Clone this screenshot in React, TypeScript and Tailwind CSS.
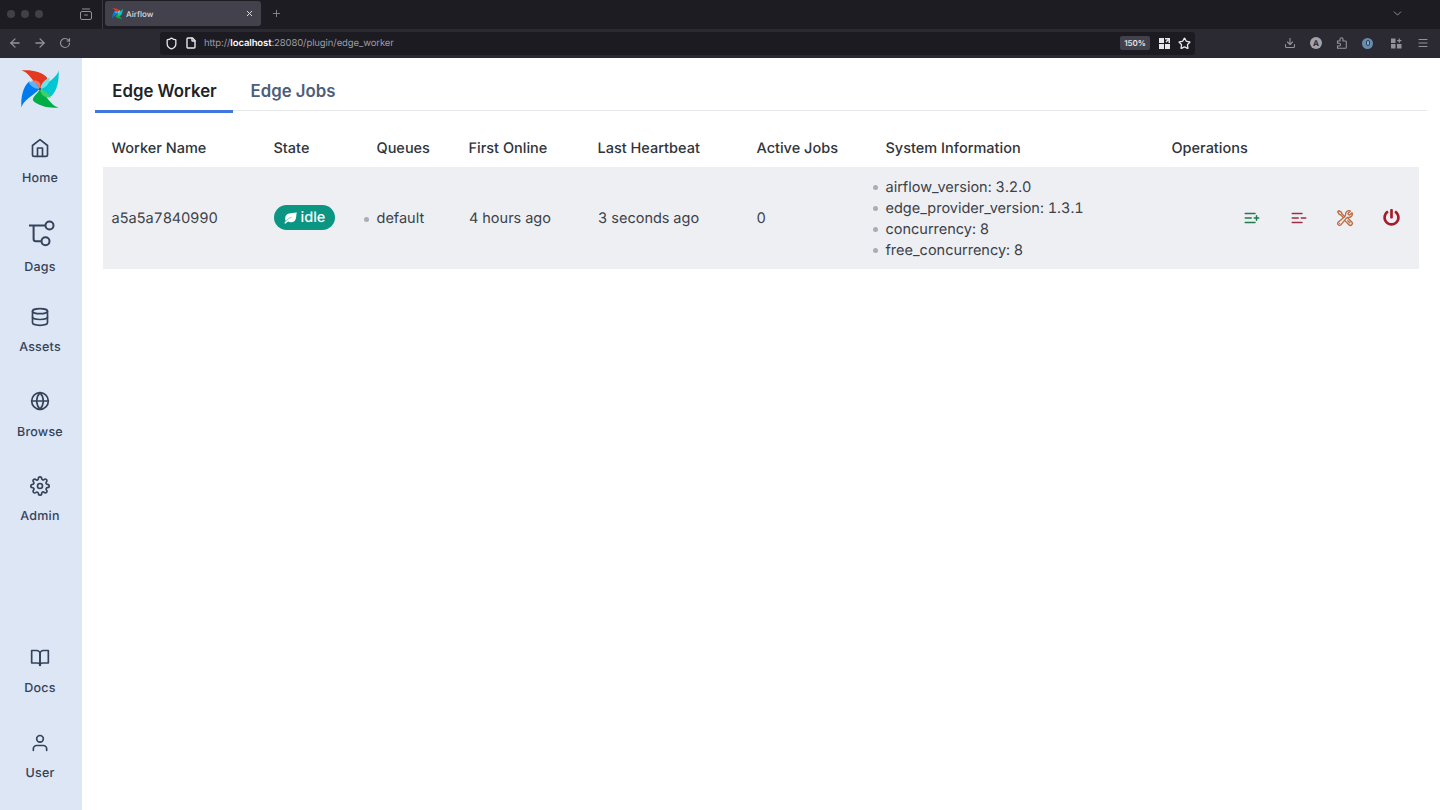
import type { ReactNode } from 'react'
import { FiBookOpen, FiDatabase, FiGlobe, FiHome, FiSettings, FiUser } from 'react-icons/fi'
import { HiOutlineWrenchScrewdriver } from 'react-icons/hi2'
import { FaPowerOff } from 'react-icons/fa'
import {
  ArrowLeft,
  ArrowRight,
  ChevronDown,
  Download,
  File,
  Menu,
  Plus,
  RotateCw,
  Shield,
  Star,
  X,
} from 'lucide-react'

interface NavItemProps {
  icon: ReactNode
  label: string
  className?: string
}

const columns = [
  'Worker Name',
  'State',
  'Queues',
  'First Online',
  'Last Heartbeat',
  'Active Jobs',
  'System Information',
  'Operations',
]

const systemInfo = [
  'airflow_version: 3.2.0',
  'edge_provider_version: 1.3.1',
  'concurrency: 8',
  'free_concurrency: 8',
]

function AirflowLogo({ className }: { className?: string }) {
  return (
    <svg className={className} viewBox="0 0 40 40">
      <path d="M20 19.500C13 13 9 3 1.500 1.500 11 .500 22 3 27 8.500 28 12 23 15 20 19.500z" fill="#e43921" />
      <path d="M20 19.500c-2-4-5-6-9-7.500 6-1.500 11 1 9 7.500z" fill="#ff7557" />
      <path d="M20.500 20C27 13 37 9 38.500 1.500 39.500 11 37 22 31.500 27 28 28 25 23 20.500 20z" fill="#00c7d4" />
      <path d="M20.500 20c.500-6 4-9 9-11.500C30 14 27 18 20.500 20z" fill="#6be2e8" />
      <path d="M20 20.500C27 27 31 37 38.500 38.500 29 39.500 18 37 13 31.500 12 28 17 25 20 20.500z" fill="#00ad46" />
      <path d="M20 20.500c5 1 9 4 11 8-6 .500-10-2-11-8z" fill="#3fcf68" />
      <path d="M19.500 20C13 27 3 31 1.500 38.500 .500 29 3 18 8.500 13 12 12 15 17 19.500 20z" fill="#017cee" />
      <path d="M19.500 20c-5 0-9-3-11-7 5-1 9 1 11 7z" fill="#5ab4fa" />
      <circle cx="20" cy="20" r="1.2" fill="#51504f" />
    </svg>
  )
}

function DagIcon() {
  return (
    <svg width="26" height="28" viewBox="0 0 26 28" fill="none" stroke="currentColor" strokeWidth="2">
      <path d="M0 5.500h16M4.600 5.500v13.500q0 2.300 2.300 2.300h5" />
      <circle cx="20.500" cy="5.500" r="4" />
      <circle cx="16.500" cy="21.300" r="4" />
    </svg>
  )
}

function LeafIcon() {
  return (
    <svg width="13" height="12" viewBox="0 0 13 12">
      <path
        d="M12.700.3C12 5 12.500 10.300 7.500 10.300c-1.600 0-2.600-.4-3.400-.8L1.200 11.800.3 11l1.500-2C.5 6.500 1.200 3 4.200 1.800 7 .8 10.500 1.500 12.700.3z"
        fill="currentColor"
      />
      <path d="M2 9.300C3.500 7.200 5.300 5.900 7.600 5.200" fill="none" stroke="#0b9684" strokeWidth=".5" />
    </svg>
  )
}

function ListIcon({ plus }: { plus?: boolean }) {
  return (
    <svg
      width="18"
      height="18"
      viewBox="0 0 24 24"
      fill="none"
      stroke="currentColor"
      strokeWidth="2"
      strokeLinecap="round"
    >
      <path d="M3 6h13M3 12h8M3 18h13M15 12h6" />
      {plus && <path d="M18 9v6" />}
    </svg>
  )
}

function Bullet() {
  return <span className="mr-2 -ml-[13px] size-[5px] shrink-0 rounded-full bg-[#a9adb5]" />
}

function NavItem({ icon, label, className = 'h-[84.6px]' }: NavItemProps) {
  return (
    <a className={`flex w-full flex-col items-center ${className}`}>
      <span className="flex h-[25px] items-center">{icon}</span>
      <span className="mt-[9px] text-[12.5px] leading-5 font-medium tracking-[0.2px]">{label}</span>
    </a>
  )
}

function Browser() {
  return (
    <header className="h-[58px] shrink-0 bg-[#2b2a33] text-[#93929b]">
      <div className="flex h-[29px] items-center bg-[#1d1c23] pb-[2px]">
        <div className="ml-[7px] flex gap-[6px]">
          <span className="size-2 rounded-full bg-[#414047]" />
          <span className="size-2 rounded-full bg-[#414047]" />
          <span className="size-2 rounded-full bg-[#414047]" />
        </div>
        <svg className="ml-[37px]" width="12" height="12" viewBox="0 0 12 12" fill="none" stroke="currentColor">
          <path d="M2 1h8M4.200 7h3.600" />
          <rect x=".5" y="3.500" width="11" height="8" rx="1.500" />
        </svg>
        <span className="mt-[2px] ml-[10px] h-[29px] w-px bg-[#3a3941]" />
        <div className="ml-[2px] flex h-[25px] w-[156px] items-center rounded-[3px] bg-[#43424c] px-[7px] text-[#dcdce0]">
          <AirflowLogo className="size-[11px]" />
          <span className="ml-[3px] text-[8px] font-medium">Airflow</span>
          <X className="ml-auto" size={9} strokeWidth={2.6} />
        </div>
        <Plus className="ml-[10px]" size={11} strokeWidth={1.8} />
        <ChevronDown className="mr-[36px] ml-auto" size={13} strokeWidth={1.8} />
      </div>
      <div className="flex h-[28px] items-center">
        <ArrowLeft className="ml-2" size={14} strokeWidth={2.200} />
        <ArrowRight className="ml-[11px]" size={14} strokeWidth={2.200} />
        <RotateCw className="ml-[12px]" size={12} strokeWidth={2.400} />
        <div className="ml-[89px] flex h-[23px] w-[1035px] items-center rounded-[3px] bg-[#1c1b22] pr-[4px] pl-[5px] text-[#e6e6ea]">
          <Shield size={13} strokeWidth={2.400} />
          <File className="ml-[7px]" size={12} strokeWidth={2.800} />
          <span className="ml-[7px] pt-[3px] text-[9.5px] tracking-[-0.1px] text-[#9c9ba3]">
            http://<b className="font-semibold text-[#fbfbfe]">localhost</b>:28080/plugin/edge_worker
          </span>
          <span className="ml-auto flex h-[14px] w-[30px] items-center justify-center rounded-[2px] bg-[#43424c] text-[8px] font-semibold">
            150%
          </span>
          <svg className="ml-[9px]" width="11" height="11" viewBox="0 0 11 11" fill="currentColor">
            <path d="M0 0h5v5H0zM0 6h5v5H0zM6 6h5v5H6zM6 0h5v5H9.500V2.500L7.500 4.500 6.500 3.500 8.500 1.500H6z" />
          </svg>
          <Star className="ml-2" size={13} strokeWidth={2.400} />
        </div>
        <div className="mr-[11px] ml-auto flex items-center">
          <Download size={12} strokeWidth={2.200} />
          <span className="ml-[14px] flex size-[12px] items-center justify-center rounded-full bg-[#a3a2aa] text-[8px] font-bold text-[#2b2a33]">
            A
          </span>
          <svg className="ml-[14px]" width="12" height="12" viewBox="0 0 12 12" fill="none" stroke="currentColor" strokeWidth="1.1">
            <path d="M1.500 4H4V2.300a1.500 1.500 0 0 1 3 0V4h2.500a.8.8 0 0 1 .8.8v5.700a.8.8 0 0 1-.8.8h-8V9h1.700a1.400 1.400 0 0 0 0-2.800H1.500z" />
          </svg>
          <span className="ml-[14px] flex size-[11px] items-center justify-center rounded-full bg-[#668cae]">
            <span className="h-[6px] w-[4px] rounded-full border border-[#2b4058] bg-[#93aec8]" />
          </span>
          <svg className="ml-[18px]" width="11" height="11" viewBox="0 0 11 11" fill="currentColor">
            <path d="M0 0.500h4.500v4.500H0zM0 6h4.500v4.500H0zM6 6h4.500v4.500H6zM7.700 0.500h1.200v1.500h1.500v1.200H8.900v1.500H7.700V3.200H6.200V2h1.500z" />
          </svg>
          <Menu className="ml-[15px]" size={12} strokeWidth={2.200} />
        </div>
      </div>
    </header>
  )
}

function Sidebar() {
  return (
    <nav className="flex w-[82px] shrink-0 flex-col items-center bg-[#dce6f5] pr-[2px] text-[#34425a]">
      <AirflowLogo className="mt-[11px] size-10" />
      <div className="mt-[26px] w-full">
        <NavItem icon={<FiHome size={20} />} label="Home" />
        <a className="flex h-[84.6px] w-full flex-col items-center">
          <span className="flex h-[28px] items-center pl-[4px]">
            <DagIcon />
          </span>
          <span className="mt-[10px] text-[12.5px] leading-5 font-medium tracking-[0.2px]">Dags</span>
        </a>
        <NavItem icon={<FiDatabase size={20} />} label="Assets" />
        <NavItem icon={<FiGlobe size={20} />} label="Browse" />
        <NavItem icon={<FiSettings size={20} />} label="Admin" />
      </div>
      <div className="mt-auto w-full">
        <NavItem icon={<FiBookOpen size={20} />} label="Docs" />
        <NavItem icon={<FiUser size={20} />} label="User" className="h-[80px]" />
      </div>
    </nav>
  )
}

function WorkerTable() {
  return (
    <table className="mt-4 ml-2 w-[1316px] table-fixed text-left text-[14.5px] text-[#3c4149] tabular-nums">
      <colgroup>
        <col className="w-[162px]" />
        <col className="w-[103px]" />
        <col className="w-[92px]" />
        <col className="w-[129px]" />
        <col className="w-[159px]" />
        <col className="w-[129px]" />
        <col className="w-[286px]" />
        <col className="w-[256px]" />
      </colgroup>
      <thead>
        <tr className="h-[40px] text-[#30343b]">
          {columns.map((column) => (
            <th key={column} className="pt-[4px] pr-2 pl-[8.5px] font-medium">
              {column}
            </th>
          ))}
        </tr>
      </thead>
      <tbody>
        <tr className="h-[102px] bg-[#edeff3]">
          <td className="pt-[2px] pl-[8.5px] tracking-[-0.25px]">a5a5a7840990</td>
          <td className="pl-[9px]">
            <span className="mb-px flex h-[25px] w-[61px] items-center justify-center gap-1 rounded-full bg-[#0b9684] pt-px font-medium text-white">
              <LeafIcon />
              idle
            </span>
          </td>
          <td className="pt-[2px] pl-[8.5px]">
            <ul>
              <li className="flex items-center">
                <Bullet />
                default
              </li>
            </ul>
          </td>
          <td className="pt-[2px] pl-[9px]">4 hours ago</td>
          <td className="pt-[2px] pl-[9px]">3 seconds ago</td>
          <td className="pt-[2px] pl-[8.5px]">0</td>
          <td className="pt-[2px] pl-[8.5px]">
            <ul className="leading-[21.2px]">
              {systemInfo.map((info) => (
                <li key={info} className="flex items-center">
                  <Bullet />
                  {info}
                </li>
              ))}
            </ul>
          </td>
          <td className="pr-[19px]">
            <div className="flex items-center justify-end pb-px">
              <span className="text-[#237a50]">
                <ListIcon plus />
              </span>
              <span className="ml-[29px] text-[#9c3048]">
                <ListIcon />
              </span>
              <HiOutlineWrenchScrewdriver className="ml-[28px] text-[#bd6b43]" size={18} strokeWidth={1.8} />
              <FaPowerOff className="ml-[29px] text-[#a51c2c]" size={17} />
            </div>
          </td>
        </tr>
      </tbody>
    </table>
  )
}

export default function App() {
  return (
    <div className="flex h-[810px] w-[1440px] flex-col overflow-hidden bg-white font-['Inter',sans-serif] [text-rendering:geometricPrecision]">
      <Browser />
      <div className="flex min-h-0 flex-1">
        <Sidebar />
        <main className="flex-1 pr-[13px] pl-[13px]">
          <div className="flex h-[53px] items-start border-b border-[#e7e8eb] pt-[6px] text-[16.8px] font-semibold">
            <button className="h-[49px] w-[138px] border-b-[3px] border-[#4078df] pt-[10px] pb-0 pl-px text-[#202228]">
              Edge Worker
            </button>
            <button className="h-[48px] w-[119px] pt-[8px] pl-px text-[#4c5e79]">Edge Jobs</button>
          </div>
          <WorkerTable />
        </main>
      </div>
    </div>
  )
}
